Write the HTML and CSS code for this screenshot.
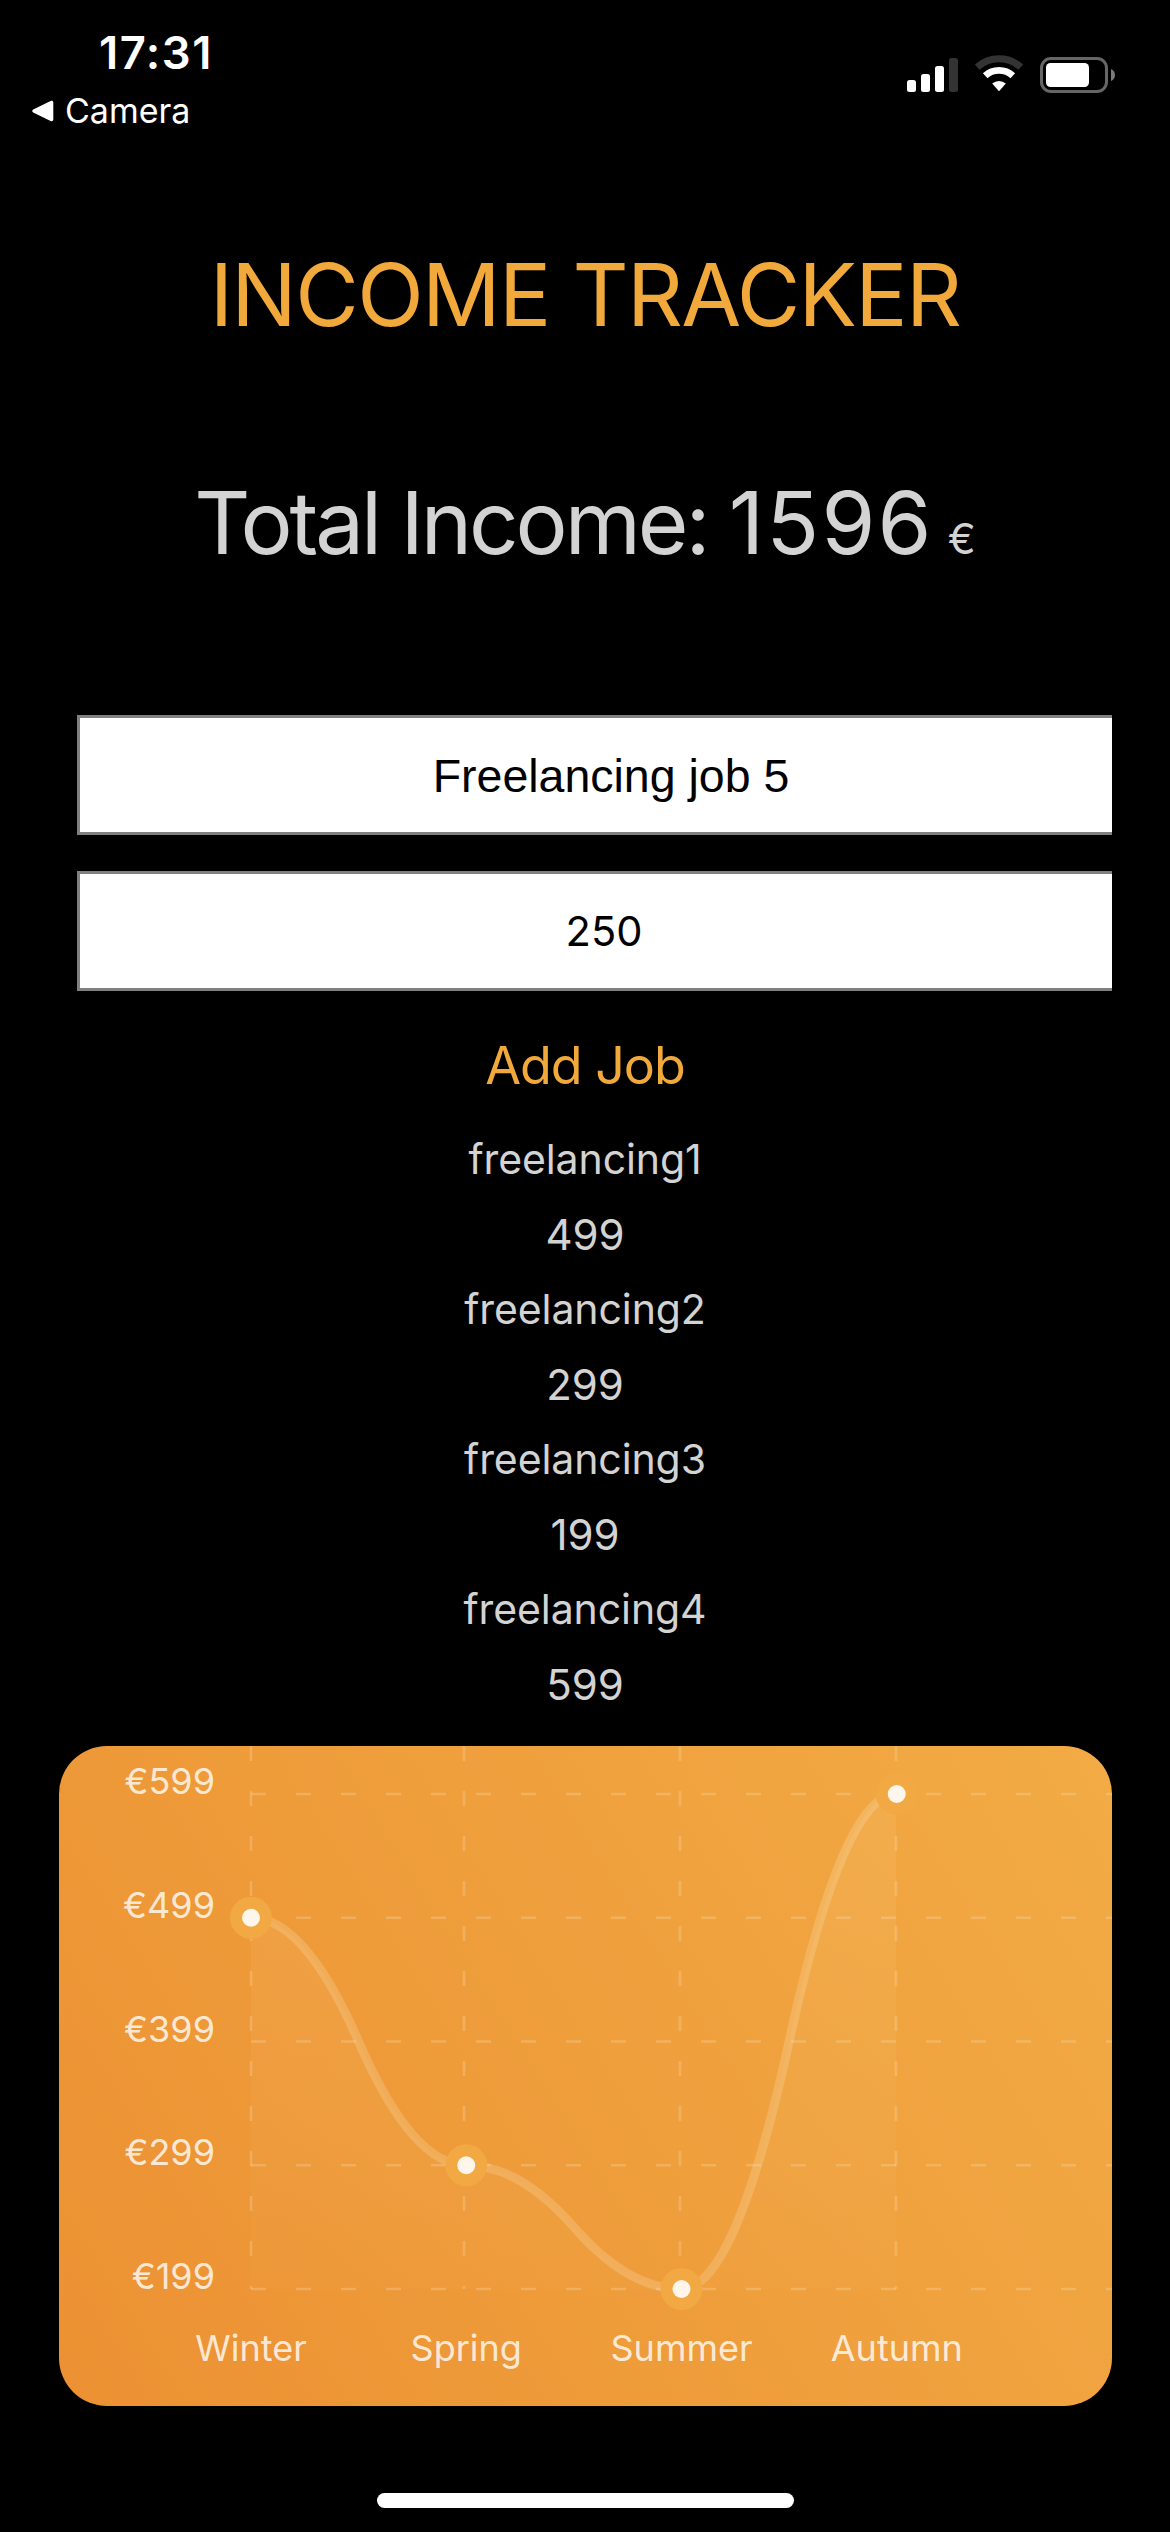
FILE: index.html
```html
<!DOCTYPE html>
<html lang="en">
<head>
<meta charset="utf-8">
<title>Income Tracker</title>
<link rel="stylesheet" href="styles.css">
</head>
<body>
<div class="screen">
  <header class="status">
    <div class="status-left">
      <div class="time">17:31</div>
      <div class="back">
        <svg class="back-arrow" width="22" height="22" viewBox="0 0 22 22"><path d="M1.2 9.6 18.6 1c1.3-.6 2.7 0 2.7 1.500v17c0 1.500-1.400 2.100-2.700 1.500L1.200 12.400c-1.300-.7-1.300-2.100 0-2.800z" fill="#fff"/></svg>
        <span>Camera</span>
      </div>
    </div>
    <div class="status-icons">
      <svg class="signal" width="51" height="34" viewBox="0 0 51 34">
        <rect x="0" y="22" width="9" height="12" rx="2.500" fill="#fff"/>
        <rect x="14" y="16" width="9" height="18" rx="2.500" fill="#fff"/>
        <rect x="28" y="8" width="9" height="26" rx="2.500" fill="#fff"/>
        <rect x="42" y="0" width="9" height="34" rx="2.500" fill="#333"/>
      </svg>
      <svg class="wifi" width="50" height="37" viewBox="0 0 50 37">
        <path d="M3.200 12.200a32.500 32.500 0 0 1 43.600 0" fill="none" stroke="#333" stroke-width="7"/>
        <path d="M11.200 20.700a20.400 20.400 0 0 1 27.600 0" fill="none" stroke="#fff" stroke-width="6.800"/>
        <path d="M18.200 28.600a10.400 10.400 0 0 1 13.600 0L25 36.200z" fill="#fff"/>
      </svg>
      <svg class="battery" width="76" height="36" viewBox="0 0 76 36">
        <rect x="1.500" y="1.500" width="65" height="33" rx="9.500" fill="none" stroke="#666" stroke-width="3"/>
        <rect x="6" y="6" width="43" height="24" rx="4.500" fill="#fff"/>
        <path d="M71 12c5.300 1.800 5.300 10.200 0 12z" fill="#7a7a7a"/>
      </svg>
    </div>
  </header>

  <main>
    <h1 class="title">INCOME TRACKER</h1>
    <div class="total"><span class="total-sum">Total Income: <span class="total-number">1596</span></span><span class="total-unit">€</span></div>

    <form class="form">
      <input class="field field-name" type="text" value="Freelancing job 5">
      <input class="field field-amount" type="text" value="250">
    </form>

    <button class="add" type="button">Add Job</button>

    <div class="jobs">
      <div class="job-name">freelancing1</div>
      <div class="job-sum">499</div>
      <div class="job-name">freelancing2</div>
      <div class="job-sum">299</div>
      <div class="job-name">freelancing3</div>
      <div class="job-sum">199</div>
      <div class="job-name">freelancing4</div>
      <div class="job-sum">599</div>
    </div>

    <div class="chart">
      <svg width="1053" height="660" viewBox="0 0 1053 660">
        <defs>
          <linearGradient id="bg" gradientUnits="userSpaceOnUse" x1="0" y1="660" x2="1053" y2="0">
            <stop offset="0" stop-color="#ec9133"/><stop offset="1" stop-color="#f2ab45"/>
          </linearGradient>
          <linearGradient id="area" gradientUnits="userSpaceOnUse" x1="0" y1="0" x2="0" y2="660">
            <stop offset="0" stop-color="#ffeebb" stop-opacity=".1"/><stop offset="1" stop-color="#ffeebb" stop-opacity="0"/>
          </linearGradient>
        </defs>
        <rect width="1053" height="660" fill="url(#bg)"/>
        <g class="grid">
          <path d="M192 48H1053M192 171.750H1053M192 295.500H1053M192 419.250H1053M192 543H1053"/>
          <path d="M192 0V543M405 0V543M621 0V543M837 0V543"/>
        </g>
        <path class="line" d="M192 171.750Q245.800 171.750 299.600 295.500Q353.400 419.250 407.250 419.250Q461.100 419.250 514.900 481.100Q568.700 543 622.500 543Q676.300 543 730.100 295.500Q784 48 837.750 48"/>
        <path fill="url(#area)" d="M192 171.750Q245.800 171.750 299.600 295.500Q353.400 419.250 407.250 419.250Q461.100 419.250 514.900 481.100Q568.700 543 622.500 543Q676.300 543 730.100 295.500Q784 48 837 48V543H192Z"/>
        <g class="halo">
          <circle cx="192" cy="171.750" r="21"/><circle cx="407.250" cy="419.250" r="21"/>
          <circle cx="622.500" cy="543" r="21"/><circle cx="837.750" cy="48" r="21"/>
        </g>
        <g class="dot">
          <circle cx="192" cy="171.750" r="9"/><circle cx="407.250" cy="419.250" r="9"/>
          <circle cx="622.500" cy="543" r="9"/><circle cx="837.750" cy="48" r="9"/>
        </g>
        <g class="label label-y">
          <text x="156" y="48">€599</text>
          <text x="156" y="171.750">€499</text>
          <text x="156" y="295.500">€399</text>
          <text x="156" y="419.250">€299</text>
          <text x="156" y="543">€199</text>
        </g>
        <g class="label label-x">
          <text x="192" y="615">Winter</text>
          <text x="407.250" y="615">Spring</text>
          <text x="622.500" y="615">Summer</text>
          <text x="837.750" y="615">Autumn</text>
        </g>
      </svg>
    </div>
  </main>

  <div class="home"></div>
</div>
</body>
</html>
```
FILE: styles.css
```css
* { box-sizing: border-box; }
body { margin: 0; background: #000; }

.screen {
  width: 1170px;
  height: 2532px;
  display: flex;
  flex-direction: column;
  overflow: hidden;
  background: #000;
  color: #d3d3d3;
  font-family: Inter, "Liberation Sans", sans-serif;
}

.status {
  height: 241px;
  display: flex;
  justify-content: space-between;
  align-items: flex-start;
  padding: 26px 54px 0 32px;
  color: #fff;
}
.status-left { display: flex; flex-direction: column; gap: 10px; }
.time {
  padding-left: 67px;
  font-size: 45.4px;
  font-weight: 600;
  line-height: 54px;
  letter-spacing: 1.5px;
}
.back { display: flex; align-items: center; font-size: 34px; line-height: 42px; }
.back-arrow { margin-right: 11px; }
.status-icons { display: flex; align-items: flex-end; padding-top: 29px; }
.wifi { margin-left: 16px; }
.battery { margin: 0 0 -1px 16px; }

main { display: flex; flex-direction: column; align-items: center; }

.title {
  margin: 0;
  font-size: 87px;
  font-weight: 400;
  line-height: 108px;
  letter-spacing: -1.65px;
  color: #f2a93b;
}
.total {
  margin-top: 120px;
  display: flex;
  align-items: baseline;
  gap: 14px;
  line-height: 108px;
}
.total-sum { font-size: 87px; letter-spacing: -3.1px; }
.total-number { letter-spacing: 2.2px; }
.total-unit { font-size: 42px; line-height: 50px; }

.form {
  width: 1053px;
  margin: 138px 0 0 1px;
  padding-left: 18px;
  display: flex;
  flex-direction: column;
  gap: 36px;
  overflow: hidden;
}
.field {
  width: 1068px;
  height: 120px;
  border: 3px solid #808080;
  border-radius: 0;
  background: #fff;
  color: #000;
  text-align: center;
  outline: none;
}
.field-name { font: 46.5px "Liberation Sans", sans-serif; padding: 2px 0 0; }
.field-amount { font: 41.6px Inter, sans-serif; padding: 0 14px 0 0; }

.add {
  margin-top: 42px;
  padding: 0;
  border: 0;
  background: none;
  color: #f2a93b;
  font: 52px/66px Inter, sans-serif;
  letter-spacing: -1.03px;
}

.jobs { margin-top: 23px; text-align: center; line-height: 75px; }
.job-name { font-size: 41px; letter-spacing: -.1px; }
.job-sum { font-size: 42px; }

.chart {
  width: 1053px;
  height: 660px;
  margin: 24px 0 0 1px;
  border-radius: 48px;
  overflow: hidden;
}
.chart svg { display: block; }
.grid { stroke: #ffeecc; stroke-opacity: .23; stroke-width: 2.6; stroke-dasharray: 15 30; fill: none; }
.line { fill: none; stroke: #fff4d8; stroke-opacity: .2; stroke-width: 9; }
.halo { fill: #f2a943; }
.dot { fill: #fef6ea; }
.label { fill: #fff; fill-opacity: .8; font-size: 36px; }
.label-y { text-anchor: end; }
.label-x { text-anchor: middle; }

.home {
  width: 417px;
  height: 15px;
  margin: 87px auto 0;
  border-radius: 7.5px;
  background: #fff;
}
```
